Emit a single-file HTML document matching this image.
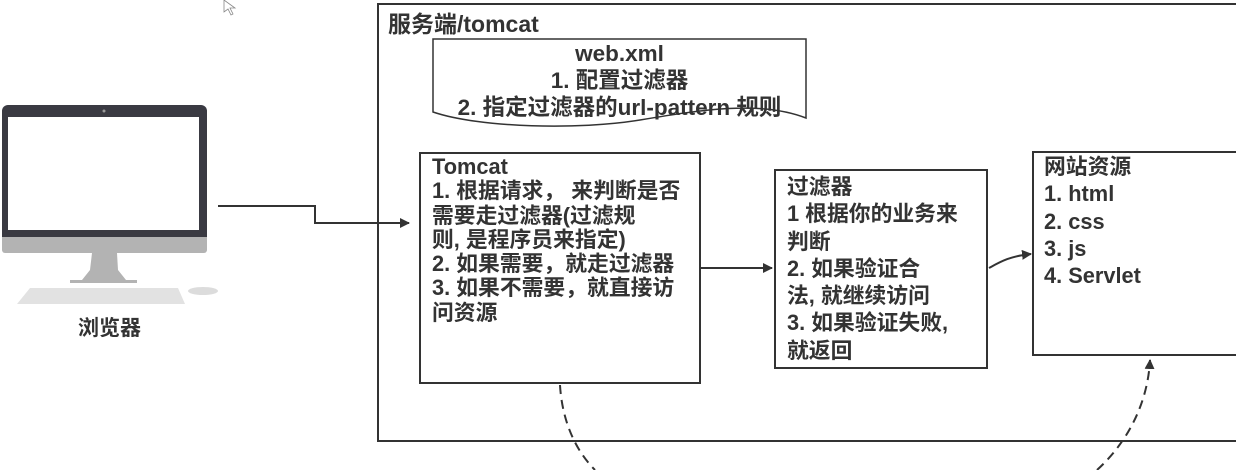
<!DOCTYPE html>
<html><head><meta charset="utf-8"><style>
html,body{margin:0;padding:0;background:#fff;}
body{width:1236px;height:470px;position:relative;overflow:hidden;font-family:"Liberation Sans","Noto Sans CJK SC",sans-serif;color:#333;font-weight:bold;}
.t{position:absolute;font-size:21.8px;white-space:nowrap;}
</style></head><body>
<svg width="1236" height="470" style="position:absolute;left:0;top:0">
<defs><marker id="a" markerWidth="10" markerHeight="10" refX="9" refY="5" orient="auto" markerUnits="userSpaceOnUse"><path d="M0,0 L10,5 L0,10 z" fill="#333"/></marker></defs>
<rect x="2" y="105" width="205" height="148" rx="6" fill="#3a3a42"/>
<rect x="2" y="237" width="205" height="16" fill="#b3b3b3" rx="3"/>
<rect x="2" y="237" width="205" height="6" fill="#b3b3b3"/>
<rect x="8" y="117" width="191" height="113" fill="#fff"/>
<circle cx="104" cy="111" r="1.5" fill="#999"/>
<path d="M92,253 L117,253 L118,270 L126,280 L137,280 L137,283 L70,283 L70,280 L82,280 L90,270 Z" fill="#b3b3b3"/>
<path d="M30,288 L178,288 L185,304 L17,304 Z" fill="#e2e2e2"/>
<ellipse cx="203" cy="291" rx="15" ry="4" fill="#dcdcdc"/>
<path d="M224,0 L224,12 L228,9 L231,15 L233,14 L230,8 L235,8 Z" fill="#fff" stroke="#888" stroke-width="0.8"/>
<path d="M1236,4 L378,4 L378,441 L1236,441" fill="none" stroke="#333" stroke-width="2"/>
<path d="M433,39 L806,39 L806,118 C760,100 700,110 640,120 C580,130 480,128 433,112 Z" fill="#fff" stroke="#333" stroke-width="1.5"/>
<rect x="420" y="153" width="280" height="230" fill="none" stroke="#333" stroke-width="2"/>
<rect x="775" y="170" width="212" height="198" fill="none" stroke="#333" stroke-width="2"/>
<path d="M1236,152 L1033,152 L1033,355 L1236,355" fill="none" stroke="#333" stroke-width="2"/>
<path d="M218,206 L315,206 L315,223 L409,223" fill="none" stroke="#333" stroke-width="2" marker-end="url(#a)"/>
<path d="M700,268 L772,268" fill="none" stroke="#333" stroke-width="2" marker-end="url(#a)"/>
<path d="M989,268 C1000,262 1010,256 1031,254" fill="none" stroke="#333" stroke-width="2" marker-end="url(#a)"/>
<path d="M560,385 C562,420 575,450 595,470" fill="none" stroke="#333" stroke-width="2" stroke-dasharray="9,6"/>
<path d="M1097,470 C1130,440 1148,400 1150,360" fill="none" stroke="#333" stroke-width="2" stroke-dasharray="9,6" marker-end="url(#a)"/>
</svg>
<div class="t" style="left:78px;top:312px;font-size:21px">浏览器</div>
<div class="t" style="left:388px;top:5px;font-size:23px">服务端/tomcat</div>
<div class="t" style="left:433px;width:373px;text-align:center;top:40px;line-height:27px;font-size:22.5px">web.xml<br>1. 配置过滤器<br>2. 指定过滤器的url-pattern 规则</div>
<div class="t" style="left:432px;top:155px;line-height:24.3px">Tomcat<br>1. 根据请求， 来判断是否<br>需要走过滤器(过滤规<br>则, 是程序员来指定)<br>2. 如果需要，就走过滤器<br>3. 如果不需要，就直接访<br>问资源</div>
<div class="t" style="left:787px;top:173px;line-height:27.3px">过滤器<br>1 根据你的业务来<br>判断<br>2. 如果验证合<br>法, 就继续访问<br>3. 如果验证失败,<br>就返回</div>
<div class="t" style="left:1044px;top:153px;line-height:27.3px">网站资源<br>1. html<br>2. css<br>3. js<br>4. Servlet</div>
</body></html>
